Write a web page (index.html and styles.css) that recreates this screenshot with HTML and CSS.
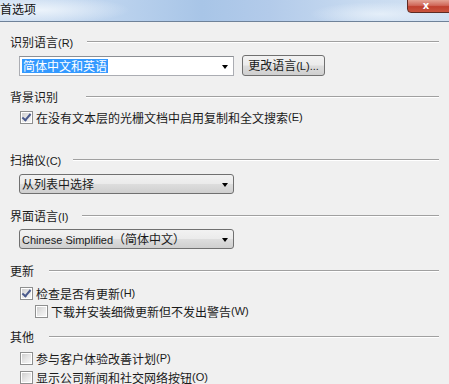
FILE: index.html
```html
<!DOCTYPE html>
<html lang="zh-CN">
<head>
  <meta charset="UTF-8" />
  <title>首选项</title>
  <link rel="stylesheet" href="styles.css">
</head>
<body>
  <div class="window">
    <div class="titlebar">
      <span class="title">首选项</span>
      <div class="close-btn">x</div>
    </div>

    <div class="content">
      <!-- 识别语言 -->
      <div class="group-head first"><span>识别语言<i class="en">(R)</i></span><div class="rule"></div></div>
      <div class="row lang-row">
        <div class="combo edit">
          <span class="selected">简体中文和英语</span>
          <span class="arrow"></span>
        </div>
        <div class="btn">更改语言<i class="en">(L)...</i></div>
      </div>

      <!-- 背景识别 -->
      <div class="group-head h-bg"><span>背景识别</span><div class="rule"></div></div>
      <label class="check c-bg"><span class="box on"></span>在没有文本层的光栅文档中启用复制和全文搜索<i class="en">(E)</i></label>

      <!-- 扫描仪 -->
      <div class="group-head h-scan"><span>扫描仪<i class="en">(C)</i></span><div class="rule"></div></div>
      <div class="combo drop d-scan"><span>从列表中选择</span><span class="arrow"></span></div>

      <!-- 界面语言 -->
      <div class="group-head h-ui"><span>界面语言<i class="en">(I)</i></span><div class="rule"></div></div>
      <div class="combo drop d-ui"><span><i class="en">Chinese Simplified</i>（简体中文）</span><span class="arrow"></span></div>

      <!-- 更新 -->
      <div class="group-head h-upd"><span>更新</span><div class="rule"></div></div>
      <label class="check c-upd"><span class="box on"></span>检查是否有更新<i class="en">(H)</i></label>
      <label class="check sub c-silent"><span class="box off"></span>下载并安装细微更新但不发出警告<i class="en">(W)</i></label>

      <!-- 其他 -->
      <div class="group-head h-other"><span>其他</span><div class="rule"></div></div>
      <label class="check c-ceip"><span class="box off"></span>参与客户体验改善计划<i class="en">(P)</i></label>
      <label class="check c-news"><span class="box off"></span>显示公司新闻和社交网络按钮<i class="en">(O)</i></label>
    </div>
  </div>
</body>
</html>
```

FILE: styles.css
```css
html, body {
  margin: 0;
  padding: 0;
}
body {
  width: 449px;
  height: 384px;
  overflow: hidden;
  background: #f0f0f0;
  font-family: "Noto Sans CJK SC", "Microsoft YaHei", sans-serif;
  font-size: 12px;
  color: #1a1a1a;
}
.window {
  width: 449px;
  height: 384px;
}
.en {
  font-style: normal;
  font-family: "Liberation Sans", Arial, sans-serif;
  font-size: 11px;
}

/* title bar (aero look) */
.titlebar {
  height: 21px;
  border-bottom: 1px solid #6f8299;
  position: relative;
  background:
    radial-gradient(ellipse 90px 14px at 40px 10px, rgba(240, 246, 252, 0.9), rgba(240, 246, 252, 0)),
    radial-gradient(ellipse 70px 12px at 380px 14px, rgba(235, 243, 251, 0.8), rgba(235, 243, 251, 0)),
    linear-gradient(90deg, #cfdff2 0%, #bcd3ee 25%, #a8c5e7 45%, #b3cbea 60%, #c7daf0 80%, #d3e2f3 100%);
}
.title {
  position: absolute;
  left: 0;
  top: 2px;
  line-height: 14px;
  font-size: 12px;
  color: #111;
}
.close-btn {
  position: absolute;
  left: 407px;
  top: -1px;
  width: 44px;
  height: 14px;
  border: 1px solid #5e2b24;
  border-radius: 0 0 0 4px;
  background: linear-gradient(180deg, #e4a394 0%, #d0685a 45%, #c0402f 55%, #c9553f 100%);
  color: #fff;
  font-family: "DejaVu Sans", sans-serif;
  font-weight: bold;
  font-size: 10px;
  line-height: 11px;
  text-align: center;
  text-indent: -6px;
  box-sizing: border-box;
}

.content {
  padding: 12px 0 0 10px;
}

/* group heading with etched line */
.group-head {
  display: flex;
  align-items: center;
  height: 16px;
  line-height: 16px;
  width: 429px;
}
.group-head span {
  white-space: nowrap;
}
.rule {
  flex: 1;
  height: 0;
  margin-left: 14px;
  border-top: 1px solid #a0a0a0;
  border-bottom: 1px solid #fff;
}
.h-bg .rule { margin-left: 28px; }
.h-scan .rule { margin-left: 12px; }
.h-upd .rule, .h-other .rule { margin-left: 15px; }

.h-bg { margin-top: 13px; }
.h-scan { margin-top: 27px; }
.h-ui { margin-top: 14px; }
.h-upd { margin-top: 14px; }
.h-other { margin-top: 10px; }

.row {
  display: flex;
  align-items: flex-start;
  margin-left: 9px;
}
.lang-row {
  margin-top: 5px;
}

/* combo boxes */
.combo {
  position: relative;
  width: 215px;
  height: 20px;
  box-sizing: border-box;
  display: flex;
  align-items: center;
  padding-left: 2px;
  line-height: 14px;
  margin-left: 9px;
}
.row .combo {
  margin-left: 0;
  margin-top: 1px;
}
.combo.edit {
  background: #fff;
  border: 1px solid #abadb3;
  border-top-color: #8c8f94;
}
.combo.drop {
  border: 1px solid #707070;
  border-radius: 3px;
  background: linear-gradient(180deg, #f2f2f2 0%, #ebebeb 48%, #dddddd 52%, #cfcfcf 100%);
}
.selected {
  background: #3399ff;
  color: #fff;
  padding: 0 1px;
  line-height: 14px;
}
.arrow {
  position: absolute;
  right: 5px;
  top: 8px;
  width: 0;
  height: 0;
  border-left: 3px solid transparent;
  border-right: 3px solid transparent;
  border-top: 4px solid #000;
}
.d-scan { margin-top: 6px; }
.d-ui { margin-top: 5px; }

.btn {
  margin-left: 8px;
  width: 83px;
  height: 21px;
  box-sizing: border-box;
  border: 1px solid #707070;
  border-radius: 3px;
  background: linear-gradient(180deg, #f2f2f2 0%, #ebebeb 48%, #dddddd 52%, #cfcfcf 100%);
  text-align: center;
  line-height: 18px;
  white-space: nowrap;
}

/* checkboxes */
.check {
  display: flex;
  align-items: center;
  height: 16px;
  margin-left: 10px;
  white-space: nowrap;
}
.check.sub {
  margin-left: 25px;
}
.box {
  width: 13px;
  height: 13px;
  box-sizing: border-box;
  border: 1px solid #8e8f8f;
  margin-right: 3px;
  position: relative;
  background: #fff;
}
.box::before {
  content: "";
  position: absolute;
  left: 1px;
  top: 1px;
  right: 1px;
  bottom: 1px;
  background: linear-gradient(135deg, #cfcfcf 0%, #e6e6e6 50%, #f7f7f7 100%);
}
.box.on::after {
  content: "";
  position: absolute;
  left: 3px;
  top: 0px;
  width: 3px;
  height: 7px;
  border-right: 2px solid #4a5a8c;
  border-bottom: 2px solid #4a5a8c;
  transform: rotate(40deg);
}
.c-bg { margin-top: 4px; }
.c-upd { margin-top: 6px; }
.c-silent { margin-top: 2px; }
.c-ceip { margin-top: 5px; }
.c-news { margin-top: 3px; }
```
